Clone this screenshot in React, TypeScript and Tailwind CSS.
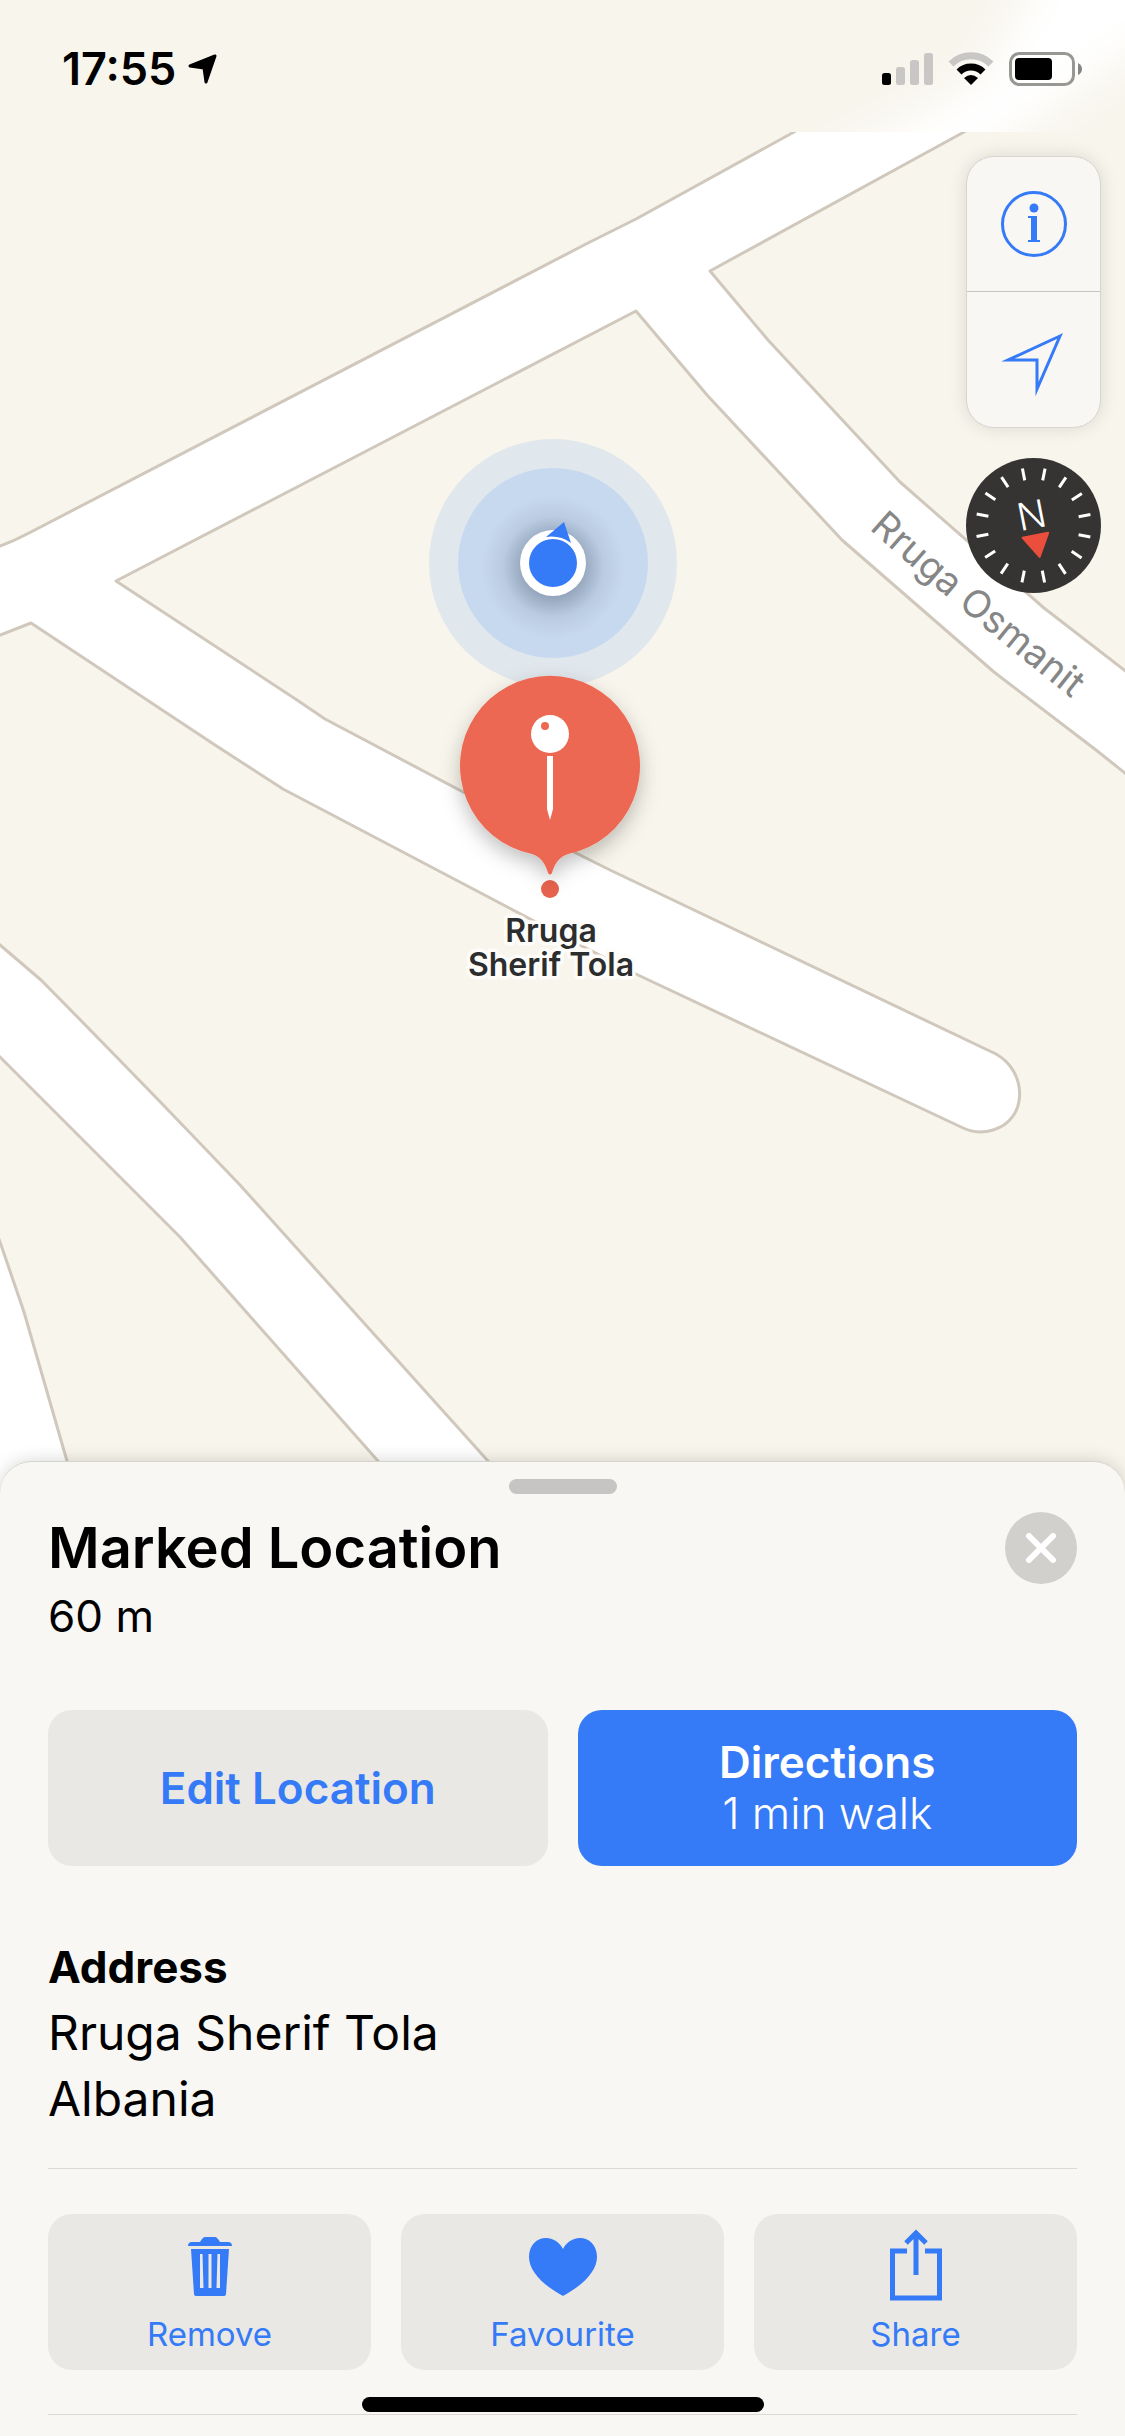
import type {ReactNode} from "react";

const COMPASS_TICKS = Array.from({length: 16}, (_, i) => i * 22.5);

const MapCanvas = () => {
    return (
        <svg
            className="absolute inset-0 w-full h-full"
            viewBox="0 0 1125 2436"
            preserveAspectRatio="xMidYMin slice"
            role="img"
            aria-label="Map"
        >
            <defs>
                <radialGradient id="dotShadow">
                    <stop offset="0.4" stopColor="#46566c" stopOpacity="0.4"/>
                    <stop offset="0.7" stopColor="#46566c" stopOpacity="0.1"/>
                    <stop offset="1" stopColor="#46566c" stopOpacity="0"/>
                </radialGradient>
                <filter id="pinShadow" x="-30%" y="-30%" width="160%" height="160%">
                    <feDropShadow dx="0" dy="8" stdDeviation="10" floodColor="#000" floodOpacity="0.25"/>
                </filter>
                <filter id="frost" x="-30%" y="-50%" width="160%" height="200%">
                    <feGaussianBlur stdDeviation="20"/>
                </filter>
                <clipPath id="statusArea">
                    <rect width="1125" height="132"/>
                </clipPath>
                <path id="osmanit" d="M869 529 Q970 620 1130 744"/>
            </defs>
            <rect width="1125" height="2436" fill="#f8f5ec"/>

            <g fill="#fff" stroke="#d0c8bc" strokeWidth="3" strokeLinejoin="round">
                <path d="M-20 556 L0 546 Q14 541 29 533 L588 243 L636 219 L794 132 L1034 0 L1204 0 L964 132 L710 271 L768 340 L900 482 L1044 608 L1150 690 L1150 793 L1096 750 L994 672 L842 540 L707 395 L636 311 L116 581 L297 700 L325 719 L465 793 L574 852 L610 870 L996 1054 C1028 1072 1028 1120 993 1130 Q976 1135 961 1127 L638 975 L534 921 L283 789 L215 745 L31 623 L-20 643 Z"/>
                <path d="M-20 928 L0 945 L41 980 Q140 1080 240 1185 L488 1461 L520 1500 L410 1500 L378 1461 L180 1237 L0 1057 L-20 1037 Z"/>
                <path d="M-20 1190 L0 1242 L24 1312 L67 1461 L78 1500 L-20 1500 Z"/>
            </g>

            {/* frosted strip under the status bar */}
            <g clipPath="url(#statusArea)">
                <rect width="1125" height="132" fill="#f8f5ed"/>
                <path d="M810 170 L980 80 L1060 -60 L1240 -60 L1150 40 L950 180 Z" fill="#fff" filter="url(#frost)"/>
            </g>

            <text fill="#868686" fontSize="38" className="font-['Inter',sans-serif]">
                <textPath href="#osmanit">Rruga Osmanit</textPath>
            </text>

            <circle cx="553" cy="563" r="124" fill="#e0e7ed"/>
            <circle cx="553" cy="563" r="95" fill="#c7d9ef"/>
            <circle cx="553" cy="567" r="72" fill="url(#dotShadow)"/>
            <circle cx="553" cy="563" r="33" fill="#fff"/>
            <path d="M564 522 L571 543 Q560 535 546 537 Z" fill="#357af6"/>
            <circle cx="553" cy="563" r="24" fill="#357af6"/>

            <circle cx="550" cy="889" r="9" fill="#e8634f"/>
            <path
                d="M532 854 A90 90 0 1 1 568 854 C558 857 554 866 552 873 Q550 876 548 873 C546 866 542 857 532 854 Z"
                fill="#ec6852"
                filter="url(#pinShadow)"
            />
            <circle cx="550" cy="734" r="19" fill="#fff"/>
            <circle cx="545" cy="726" r="4" fill="#ec6852"/>
            <path d="M547 756 H553 V809 L550 820 L547 809 Z" fill="#fff"/>

            <text
                textAnchor="middle"
                fontSize="32"
                fill="#2c2d2e"
                stroke="#fdfcf9"
                strokeWidth="7"
                strokeLinejoin="round"
                paintOrder="stroke"
                className="font-['Inter',sans-serif] font-semibold"
            >
                <tspan x="551" y="942">Rruga</tspan>
                <tspan x="551" y="976">Sherif Tola</tspan>
            </text>
        </svg>
    )
}

const StatusBar = () => {
    return (
        <header className="relative flex justify-between h-[132px] pt-[42px] pl-[62px] pr-[42px]">
            <div className="flex items-center h-[54px] gap-x-3">
                <span className="text-[45px] font-semibold leading-[54px]">17:55</span>
                <svg className="w-[30px] h-[30px]" viewBox="0 0 30 30" aria-hidden="true">
                    <path d="M27 2 L2 12 L16 14 L18 28 Z" stroke="#000" strokeWidth="3" strokeLinejoin="round"/>
                </svg>
            </div>
            <div className="flex items-center h-[54px] gap-x-[15px]">
                <svg className="w-[51px] h-[34px]" viewBox="0 0 51 34" aria-label="Signal">
                    <rect x="0" y="21" width="9" height="12" rx="2.5"/>
                    <g fill="#c8c7c5">
                        <rect x="14" y="15" width="9" height="18" rx="2.5"/>
                        <rect x="28" y="8" width="9" height="25" rx="2.5"/>
                        <rect x="42" y="1" width="9" height="32" rx="2.5"/>
                    </g>
                </svg>
                <svg className="w-[46px] h-[34px]" viewBox="0 0 46 34" fill="none" aria-label="Wi-Fi">
                    <path d="M3 12 A28.500 28.500 0 0 1 43 12" stroke="#c8c7c5" strokeWidth="7"/>
                    <path d="M11 20 A17 17 0 0 1 35 20" stroke="#000" strokeWidth="7"/>
                    <path d="M23 33 L16 26 Q23 20 30 26 Z" fill="#000"/>
                </svg>
                <svg className="w-[74px] h-[34px]" viewBox="0 0 74 34" aria-label="Battery">
                    <rect x="1.500" y="1.500" width="63" height="31" rx="9" fill="none" stroke="#979794" strokeWidth="3"/>
                    <rect x="6" y="6" width="37" height="22" rx="4"/>
                    <path d="M69 11 Q73 13 73 17 Q73 21 69 23 Z" fill="#868684"/>
                </svg>
            </div>
        </header>
    )
}

const Compass = () => {
    return (
        <button aria-label="Compass" className="size-[135px] rounded-full">
            <svg viewBox="-67.5 -67.5 135 135" className="w-full h-full">
                <circle r="67.500" fill="#2e2d2b" fillOpacity="0.97"/>
                <g transform="rotate(-11)">
                    {COMPASS_TICKS.map((angle) => (
                        <path key={angle} d="M0 -58 V-46" stroke="#fff" strokeWidth="3" transform={`rotate(${angle})`}/>
                    ))}
                    <text y="3" fill="#fff" fontSize="38" textAnchor="middle" className="font-['Inter',sans-serif] font-light">N</text>
                    <path d="M-13 10 H13 L0 32 Z" fill="#eb4e3d" stroke="#eb4e3d" strokeWidth="2" strokeLinejoin="round"/>
                </g>
            </svg>
        </button>
    )
}

const MapControls = () => {
    return (
        <div className="relative flex flex-col items-end gap-y-[30px] pt-6 pr-6">
            <div className="flex flex-col w-[135px] rounded-[28px] border border-[#d8d5cd] divide-y divide-[#c6c5c2] bg-[#f8f7f4] shadow-[0_0_18px_rgba(0,0,0,0.12)]">
                <button aria-label="Information" className="flex justify-center items-center h-[135px]">
                    <svg className="size-[66px]" viewBox="0 0 66 66" fill="#357af6">
                        <circle cx="33" cy="33" r="31.500" fill="none" stroke="#357af6" strokeWidth="3"/>
                        <circle cx="33" cy="17" r="4.500"/>
                        <path d="M27 25 H36 V49 H39 V51 H27 V49 H30 V27 H27 Z"/>
                    </svg>
                </button>
                <button aria-label="Track my location" className="flex justify-center items-center h-[135px]">
                    <svg className="size-[66px] overflow-visible" viewBox="0 0 66 66" fill="none">
                        <path d="M59 9 L7 33 H36 V62 Z" stroke="#357af6" strokeWidth="3" strokeMiterlimit="10"/>
                    </svg>
                </button>
            </div>
            <Compass/>
        </div>
    )
}

const TrashIcon = () => (
    <svg className="w-[72px] h-[76px]" viewBox="0 0 72 76" fill="#357af6" aria-hidden="true">
        <path d="M14 20 Q14 16 18 16 H26 Q29 11 31 11 H41 Q43 11 46 16 H54 Q58 16 58 20 Z"/>
        <path fillRule="evenodd" d="M17 23 H55 L52 68 Q52 70 49 70 H23 Q20 70 20 68 Z M26 28 V62 H29.500 L28.500 28 Z M34.500 28 V62 H37.500 V28 Z M43.500 28 L42.500 62 H46 V28 Z"/>
    </svg>
)

const HeartIcon = () => (
    <svg className="w-[72px] h-[76px]" viewBox="0 0 72 76" fill="#357af6" aria-hidden="true">
        <path d="M36 70 C14 58 2 44 2 31 C2 19 10 12 19 12 C27 12 33 17 36 23 C39 17 45 12 53 12 C62 12 70 19 70 31 C70 44 58 58 36 70 Z"/>
    </svg>
)

const ShareIcon = () => (
    <svg className="w-[72px] h-[76px]" viewBox="0 0 72 76" fill="none" stroke="#357af6" strokeWidth="5" aria-hidden="true">
        <path d="M27 25 H12.500 V72 H59.500 V25 H45"/>
        <path d="M36 49 V7 M26 17 L36 7 L46 17"/>
    </svg>
)

interface ActionButtonProps {
    label: string;
    icon: ReactNode;
}

const ActionButton = ({label, icon}: ActionButtonProps) => {
    return (
        <button className="flex flex-1 flex-col items-center h-[156px] pt-3 rounded-3xl bg-[#e9e8e4] text-[#357af6]">
            {icon}
            <span className="mt-3 text-[33px] leading-[40px]">{label}</span>
        </button>
    )
}

const LocationSheet = () => {
    return (
        <main className="relative mt-auto px-12 pt-[17px] pb-[21px] rounded-t-[32px] border-t border-[#d5d3cd] bg-[#f8f7f4] shadow-[0_0_18px_rgba(0,0,0,0.16)]">
            <div className="mx-auto w-[108px] h-[15px] rounded-full bg-[#c6c5c3]"/>
            <div className="flex justify-between items-center mt-[18px]">
                <h1 className="text-[56px] font-semibold leading-[72px]">Marked Location</h1>
                <button aria-label="Close" className="flex justify-center items-center size-[72px] rounded-full bg-[#d1d0cc]">
                    <svg className="size-[30px]" viewBox="0 0 30 30" stroke="#fff" strokeWidth="6" strokeLinecap="round">
                        <path d="M3 3 L27 27 M27 3 L3 27"/>
                    </svg>
                </button>
            </div>
            <p className="text-[44px] leading-[64px]">60 m</p>

            <div className="flex gap-x-[30px] mt-[62px]">
                <button className="flex-1 h-[156px] rounded-3xl bg-[#e9e8e4] text-[44px] font-semibold text-[#357af6]">
                    Edit Location
                </button>
                <button className="flex flex-1 flex-col justify-center items-center h-[156px] rounded-3xl bg-[#357af6] text-[44px] leading-[51px] text-white">
                    <span className="font-semibold">Directions</span>
                    <span className="font-light">1 min walk</span>
                </button>
            </div>

            <section className="mt-[68px] text-[48px] leading-[66px]">
                <h2 className="text-[44px] font-bold leading-[66px]">Address</h2>
                <p>Rruga Sherif Tola</p>
                <p>Albania</p>
            </section>

            <div className="mt-9 pt-[45px] border-t border-[#dad9d6]">
                <div className="flex gap-x-[30px]">
                    <ActionButton label="Remove" icon={<TrashIcon/>}/>
                    <ActionButton label="Favourite" icon={<HeartIcon/>}/>
                    <ActionButton label="Share" icon={<ShareIcon/>}/>
                </div>
            </div>
            <div className="mt-11 border-t border-[#dad9d6]"/>
            <div className="absolute bottom-6 left-1/2 -translate-x-1/2 w-[402px] h-[15px] rounded-full bg-black"/>
        </main>
    )
}

export default function App() {
    return (
        <div className="relative flex flex-col min-h-screen overflow-hidden bg-[#f8f5ec] text-black font-['Inter',sans-serif]">
            <MapCanvas/>
            <StatusBar/>
            <MapControls/>
            <LocationSheet/>
        </div>
    )
}
